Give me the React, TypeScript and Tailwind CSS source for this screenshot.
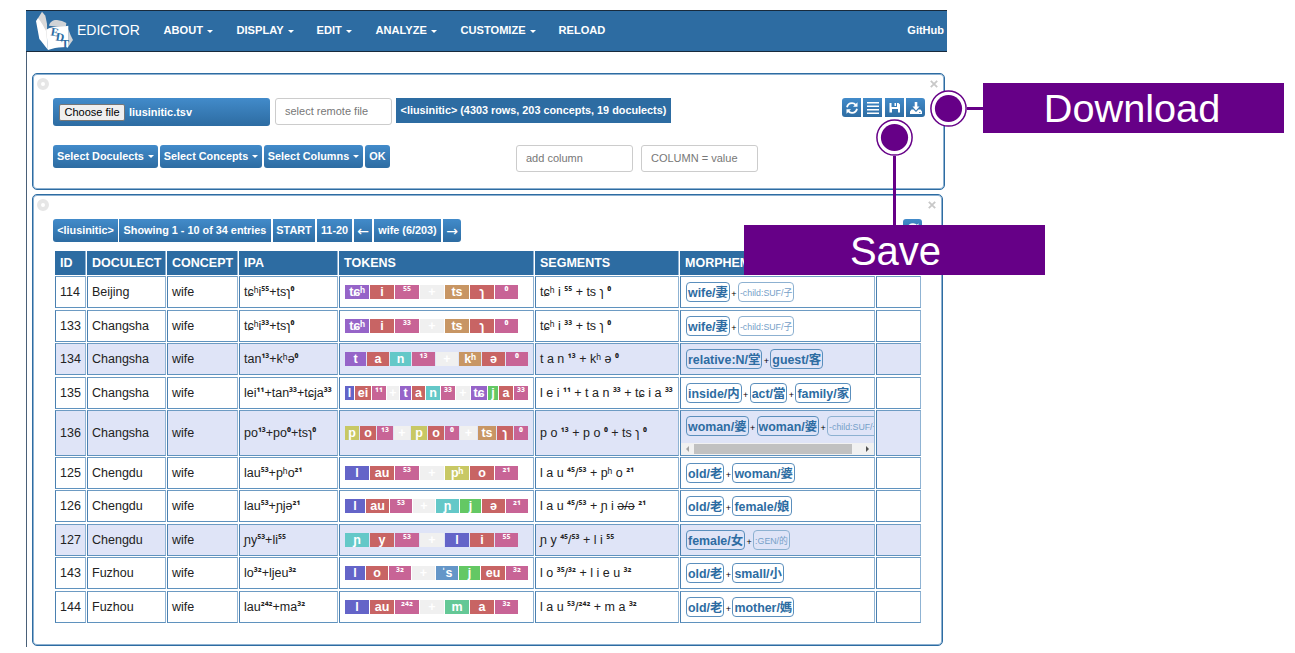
import React from "react";

const TOKEN_COLORS: Record<string, string> = {
  t: "bg-[#9664c8]",
  v: "bg-[#c86464]",
  tone: "bg-[#c86496]",
  plus: "bg-[#f0f0f0]",
  ts: "bg-[#c89664]",
  n: "bg-[#64c8c8]",
  l: "bg-[#6464c8]",
  j: "bg-[#64c864]",
  p: "bg-[#c8c864]",
  s: "bg-[#6496c8]",
  m: "bg-[#64c896]",
};

type Token = [text: string, kind: string];
type Morpheme = { text: string; weak?: boolean };
type Row = {
  id: number;
  place: string;
  ipa: string;
  tokens: Token[];
  starts: number[];
  segments: string;
  morphemes: Morpheme[];
  shaded?: boolean;
  scroll?: boolean;
  height: string;
};

const EVEN7 = [0, 25, 50, 75, 100, 125, 150, 174];

const H33 = "h-[32px] mb-px";
const H34 = "h-[32px] mb-[2px]";

const ROWS: Row[] = [
  {
    id: 114, place: "Beijing", ipa: "tɕʰi⁵⁵+tsɿ⁰", height: H34,
    tokens: [["tɕʰ", "t"], ["i", "v"], ["⁵⁵", "tone"], ["+", "plus"], ["ts", "ts"], ["ɿ", "v"], ["⁰", "tone"]],
    starts: EVEN7, segments: "tɕʰ i ⁵⁵ + ts ɿ ⁰",
    morphemes: [{ text: "wife/妻" }, { text: "-child:SUF/子", weak: true }],
  },
  {
    id: 133, place: "Changsha", ipa: "tɕʰi³³+tsɿ⁰", height: H33,
    tokens: [["tɕʰ", "t"], ["i", "v"], ["³³", "tone"], ["+", "plus"], ["ts", "ts"], ["ɿ", "v"], ["⁰", "tone"]],
    starts: EVEN7, segments: "tɕʰ i ³³ + ts ɿ ⁰",
    morphemes: [{ text: "wife/妻" }, { text: "-child:SUF/子", weak: true }],
  },
  {
    id: 134, place: "Changsha", ipa: "tan¹³+kʰə⁰", height: H34, shaded: true,
    tokens: [["t", "t"], ["a", "v"], ["n", "n"], ["¹³", "tone"], ["+", "plus"], ["kʰ", "ts"], ["ə", "v"], ["⁰", "tone"]],
    starts: [0, 22, 45, 67, 91, 114, 137, 161, 184], segments: "t a n ¹³ + kʰ ə ⁰",
    morphemes: [{ text: "relative:N/堂" }, { text: "guest/客" }],
  },
  {
    id: 135, place: "Changsha", ipa: "lei¹¹+tan³³+tɕja³³", height: H33,
    tokens: [["l", "l"], ["ei", "v"], ["¹¹", "tone"], ["+", "plus"], ["t", "t"], ["a", "v"], ["n", "n"], ["³³", "tone"], ["+", "plus"], ["tɕ", "t"], ["j", "j"], ["a", "v"], ["³³", "tone"]],
    starts: [0, 10, 27, 42, 55, 67, 81, 96, 111, 126, 143, 154, 169, 184], segments: "l e i ¹¹ + t a n ³³ + tɕ i a ³³",
    morphemes: [{ text: "inside/内" }, { text: "act/當" }, { text: "family/家" }],
  },
  {
    id: 136, place: "Changsha", ipa: "po¹³+po⁰+tsɿ⁰", height: "h-[46px] mb-px", shaded: true, scroll: true,
    tokens: [["p", "p"], ["o", "v"], ["¹³", "tone"], ["+", "plus"], ["p", "p"], ["o", "v"], ["⁰", "tone"], ["+", "plus"], ["ts", "ts"], ["ɿ", "v"], ["⁰", "tone"]],
    starts: [0, 15, 32, 49, 66, 83, 100, 115, 133, 152, 169, 184], segments: "p o ¹³ + p o ⁰ + ts ɿ ⁰",
    morphemes: [{ text: "woman/婆" }, { text: "woman/婆" }, { text: "-child:SUF/子", weak: true }],
  },
  {
    id: 125, place: "Chengdu", ipa: "lau⁵³+pʰo²¹", height: H33,
    tokens: [["l", "l"], ["au", "v"], ["⁵³", "tone"], ["+", "plus"], ["pʰ", "p"], ["o", "v"], ["²¹", "tone"]],
    starts: EVEN7, segments: "l a u ⁴⁵/⁵³ + pʰ o ²¹",
    morphemes: [{ text: "old/老" }, { text: "woman/婆" }],
  },
  {
    id: 126, place: "Chengdu", ipa: "lau⁵³+ɲjə²¹", height: H34,
    tokens: [["l", "l"], ["au", "v"], ["⁵³", "tone"], ["+", "plus"], ["ɲ", "n"], ["j", "j"], ["ə", "v"], ["²¹", "tone"]],
    starts: [0, 21, 45, 68, 91, 115, 137, 161, 184],
    segments: "l a u ⁴⁵/⁵³ + ɲ i ə/ə ²¹",
    morphemes: [{ text: "old/老" }, { text: "female/娘" }],
  },
  {
    id: 127, place: "Chengdu", ipa: "ɲy⁵³+li⁵⁵", height: H33, shaded: true,
    tokens: [["ɲ", "n"], ["y", "v"], ["⁵³", "tone"], ["+", "plus"], ["l", "l"], ["i", "v"], ["⁵⁵", "tone"]],
    starts: EVEN7, segments: "ɲ y ⁴⁵/⁵³ + l i ⁵⁵",
    morphemes: [{ text: "female/女" }, { text: ":GEN/的", weak: true }],
  },
  {
    id: 143, place: "Fuzhou", ipa: "lo³²+ljeu³²", height: H34,
    tokens: [["l", "l"], ["o", "v"], ["³²", "tone"], ["+", "plus"], ["ˈs", "s"], ["j", "j"], ["eu", "v"], ["³²", "tone"]],
    starts: [0, 21, 44, 67, 91, 114, 136, 161, 184], segments: "l o ³⁵/³² + l i e u ³²",
    morphemes: [{ text: "old/老" }, { text: "small/小" }],
  },
  {
    id: 144, place: "Fuzhou", ipa: "lau²⁴²+ma³²", height: H33,
    tokens: [["l", "l"], ["au", "v"], ["²⁴²", "tone"], ["+", "plus"], ["m", "m"], ["a", "v"], ["³²", "tone"]],
    starts: EVEN7, segments: "l a u ⁵³/²⁴² + m a ³²",
    morphemes: [{ text: "old/老" }, { text: "mother/媽" }],
  },
];

const COLS = "grid grid-cols-[31px_79px_71px_99px_195px_144px_195px_45px] gap-x-px";

// Tone digits get a bolder, narrower face than the letters; slashed variants are struck through.
function Ipa({ text }: { text: string }) {
  const parts = text.split(/([⁰¹²³⁴⁵⁶⁷⁸⁹]+|ə\/ə)/);
  return (
    <span>
      {parts.map((p, i) => {
        if (i % 2 === 0) return p;
        return p === "ə/ə" ? (
          <s key={i}>{p}</s>
        ) : (
          <span key={i} className="align-[1px] font-['Noto_Sans','Open_Sans',sans-serif] text-[10.4px] leading-none font-bold">{p}</span>
        );
      })}
    </span>
  );
}

const Caret = () => (
  <span className="ml-[4px] inline-block border-x-[3px] border-t-[3px] border-x-transparent border-t-white align-middle" />
);

const GRAD = "bg-linear-to-b from-[#428bca] to-[#2d6ca2]";

function Logo() {
  return (
    <svg viewBox="0 0 120 120" className="h-[40px] w-[40px] shrink-0">
      <path d="M6 26 21 2l10 12 5 24 1 70z" fill="#d9d9d9" />
      <path d="M3 30 9 22c8 8 18 26 24 38l6 56C30 106 20 92 13 84z" fill="#fff" />
      <path d="M42 44C44 32 56 26 66 27c10 1 20 5 28 9l-2 14z" fill="#d0d3d6" />
      <path d="M100 54c4 12 9 24 14 33-5 7-10 14-15 22z" fill="#d0d3d6" />
      <path d="M34 56C55 42 75 50 100 44l-1 66C78 106 58 110 39 117z" fill="#fff" />
      <g fill="#2d6ca2" fontFamily="Liberation Serif, serif" fontWeight="700" fontSize="35">
        <text x="46" y="73" transform="rotate(10 46 73)">E</text>
        <text x="61" y="88" transform="rotate(10 61 88)">D</text>
        <text x="79" y="110">T</text>
      </g>
    </svg>
  );
}

function Ring() {
  return <span className="h-[12px] w-[12px] shrink-0 rounded-full border-4 border-[#e6e6e6]" />;
}

function Cross() {
  return (
    <svg viewBox="0 0 8 8" className="h-[8px] w-[8px] shrink-0" stroke="#c8c8c8" strokeWidth="1.8">
      <path d="M.8.8l6.4 6.4M7.2.8L.8 7.2" />
    </svg>
  );
}

function Refresh() {
  return (
    <svg viewBox="0 0 14 14" className="h-[14px] w-[14px]" fill="none" stroke="#fff" strokeWidth="1.8">
      <path d="M2 6.3C2.6 3.6 4.6 2.2 7 2.2c1.6 0 2.8.6 3.7 1.6" />
      <path d="M12 7.7C11.4 10.4 9.4 11.8 7 11.8c-1.6 0-2.8-.6-3.7-1.6" />
      <path d="M12.5 1.3v4.500H8zM1.500 12.700V8.200H6z" fill="#fff" stroke="none" />
    </svg>
  );
}

function Lines() {
  return (
    <svg viewBox="0 0 14 14" className="h-[14px] w-[14px]" fill="#fff">
      <path d="M1 1h12v1.400H1zM1 4.500h12v1.400H1zM1 8h12v1.400H1zM1 11.500h12v1.400H1z" />
    </svg>
  );
}

function Floppy() {
  return (
    <svg viewBox="0 0 14 14" className="h-[14px] w-[14px]" fill="#fff" fillRule="evenodd">
      <path d="M1.500 2h2v4h5.500V2H10.500l1.500 1.500v8H10V8H4v3.500H1.500zM6.500 2H8v3H6.500z" />
    </svg>
  );
}

function SaveDown() {
  return (
    <svg viewBox="0 0 14 14" className="h-[14px] w-[14px]" fill="#fff" fillRule="evenodd">
      <path d="M5.700 1h2.600v4.500h2.200L7 9.500 3.500 5.500h2.200z" />
      <path d="M2.500 8.500h2L7 11l2.500-2.500h2l1.500 2V13H1v-2.500zM10 11h1.500v.8H10z" />
    </svg>
  );
}

function IconButton({ children, className = "" }: { children: React.ReactNode; className?: string }) {
  return <button className={`flex h-[19px] w-[19px] items-center justify-center ${GRAD} ${className}`}>{children}</button>;
}

function Btn({ children, className = "" }: { children: React.ReactNode; className?: string }) {
  return (
    <button className={`flex h-[23px] items-center justify-center text-[10.85px] font-bold whitespace-nowrap text-white ${GRAD} ${className}`}>
      {children}
    </button>
  );
}

function Field({ text, className }: { text: string; className: string }) {
  return (
    <input
      placeholder={text}
      className={`h-[27px] w-[117px] rounded-[3px] border border-[#ccc] px-[9px] text-[11px] placeholder:text-[#777] ${className}`}
    />
  );
}

function Dot() {
  return (
    <svg viewBox="0 0 37 37" className="h-[37px] w-[37px] shrink-0">
      <circle cx="18.5" cy="18.5" r="17.6" fill="#fff" stroke="#660087" strokeWidth="1.5" />
      <circle cx="18.5" cy="18.5" r="13.6" fill="#660087" />
    </svg>
  );
}

function Callout({ text, className }: { text: string; className: string }) {
  return (
    <span className={`flex h-[50px] w-[301px] items-center justify-center bg-[#660087] pt-[2px] leading-none text-white ${className}`}>{text}</span>
  );
}

const EDGE = "border border-t-[#6d9bc3] border-r-[#8fb3d3] border-b-[#5f92be] border-l-[#4a80b0]";
const CELL = `flex min-w-0 items-center overflow-hidden px-[4px] whitespace-nowrap ${EDGE}`;
const PANEL = "ml-[5px] rounded-[5px] border border-[#2d6ca2] inset-shadow-[0_0_0_1px_#8db1d1]";

function Tokens({ row }: { row: Row }) {
  return (
    <div className="flex h-[14px]">
      {row.tokens.map(([text, kind], i) => (
        <span key={i} className="h-[14px] shrink-0 pr-px" style={{ width: row.starts[i + 1] - row.starts[i] }}>
          <span className={`flex h-full items-center justify-center text-[12.5px] leading-none font-bold text-white ${TOKEN_COLORS[kind]}`}>
            <Ipa text={text} />
          </span>
        </span>
      ))}
    </div>
  );
}

function Morphemes({ row }: { row: Row }) {
  return (
    <div className="flex items-center pl-px">
      {row.morphemes.map((m, i) => (
        <React.Fragment key={i}>
          {i > 0 && <span className="w-[8px] shrink-0 pt-[4px] text-center text-[9px] leading-none text-black">+</span>}
          <span
            className={
              m.weak
                ? "flex h-[20px] shrink-0 items-center rounded-[4px] border border-[#8db1d1] px-px pt-[4px] text-[8.8px] text-[#75a0c8]"
                : "flex h-[20px] shrink-0 items-center rounded-[4px] border border-[#5b8fbd] px-px pt-[3px] text-[12.4px] font-bold text-[#2d6ca2]"
            }
          >
            {m.text}
          </span>
        </React.Fragment>
      ))}
    </div>
  );
}

function ScrollBar() {
  return (
    <div className="flex h-[12px] w-full items-center justify-between bg-[#f1f1f1] px-[5px]">
      <span className="border-y-[3px] border-r-[3px] border-y-transparent border-r-[#a3a3a3]" />
      <span className="mr-auto ml-[5px] h-[10px] w-[158px] bg-[#c1c1c1]" />
      <span className="border-y-[3px] border-l-[3px] border-y-transparent border-l-[#505050]" />
    </div>
  );
}

const HEADS = ["ID", "DOCULECT", "CONCEPT", "IPA", "TOKENS", "SEGMENTS", "MORPHEMES", ""];
const MENU: [string, string, boolean][] = [
  ["ABOUT", "w-[73px]", true],
  ["DISPLAY", "w-[80px]", true],
  ["EDIT", "w-[59px]", true],
  ["ANALYZE", "w-[85px]", true],
  ["CUSTOMIZE", "w-[98px]", true],
  ["RELOAD", "w-[60px]", false],
];

export default function App() {
  return (
    <div className="relative h-[653px] w-[1295px] overflow-hidden bg-white pt-[10px] pl-[26px] font-['Liberation_Sans','Noto_Sans_CJK_SC',sans-serif] text-[#222]">
      <div className="h-[637px] w-[921px] border-l border-[#4a6078]">
        <nav className="-ml-px flex h-[42px] items-center border-y border-[#182a3c] bg-[#2d6ca2] pr-[3px] pl-[9px] text-white">
          <Logo />
          <span className="ml-[2px] w-[86.5px] pb-px text-[14px]">EDICTOR</span>
          {MENU.map(([label, w, caret]) => (
            <span key={label} className={`${w} pb-px text-[11.1px] font-bold whitespace-nowrap`}>
              {label}
              {caret && <Caret />}
            </span>
          ))}
          <span className="ml-auto pb-px text-[11px] font-bold">GitHub</span>
        </nav>

        <section className={`mt-[21px] h-[117px] w-[913px] ${PANEL}`}>
          <div className="flex items-center justify-between pt-[4px] pr-[6px] pl-[4px]">
            <Ring />
            <Cross />
          </div>
          <div className="mt-[8px] flex items-start pl-[20px]">
            <div className={`flex h-[28px] w-[217px] items-center rounded-[3px] pl-[6px] text-[11px] ${GRAD}`}>
              <button className="h-[17px] w-[66px] rounded-[2px] border border-[#767676] bg-[#efefef] leading-none text-black">Choose file</button>
              <span className="ml-[4px] text-[10.9px] font-bold text-white">liusinitic.tsv</span>
            </div>
            <Field text="select remote file" className="ml-[5px] pb-[2px]" />
            <div className="ml-[4px] flex h-[25px] w-[275px] items-center justify-center bg-[#2d6ca2] text-[10.85px] font-bold whitespace-nowrap text-white">
              &lt;liusinitic&gt; (4303 rows, 203 concepts, 19 doculects)
            </div>
            <div className="ml-[171px] flex gap-[2px]">
              <IconButton className="rounded-l-[3px]"><Refresh /></IconButton>
              <IconButton><Lines /></IconButton>
              <IconButton className="ml-px"><Floppy /></IconButton>
              <IconButton className="rounded-r-[3px]"><SaveDown /></IconButton>
            </div>
          </div>
          <div className="mt-[19px] flex pl-[20px]">
            <Btn className="w-[105px] rounded-[3px]">Select Doculects<Caret /></Btn>
            <Btn className="ml-[2px] w-[102px] rounded-[3px]">Select Concepts<Caret /></Btn>
            <Btn className="ml-[2px] w-[99px] rounded-[3px]">Select Columns<Caret /></Btn>
            <Btn className="ml-[2px] w-[25px] rounded-[3px]">OK</Btn>
            <Field text="add column" className="ml-[126px] pb-px" />
            <Field text="COLUMN = value" className="ml-[8px] pb-px" />
          </div>
        </section>

        <section className={`mt-[4px] h-[452px] w-[911px] ${PANEL}`}>
          <div className="flex items-center justify-between pt-[4px] pr-[6px] pl-[4px]">
            <Ring />
            <Cross />
          </div>
          <div className="mt-[8px] flex pr-[20px] pl-[20px]">
            <Btn className="mr-px w-[65px] rounded-l-[3px]">&lt;liusinitic&gt;</Btn>
            <Btn className="mr-[2px] w-[152px]">Showing 1 - 10 of 34 entries</Btn>
            <Btn className="mr-[2px] w-[42px]">START</Btn>
            <Btn className="mr-[2px] w-[35px]">11-20</Btn>
            <Btn className="mr-[2px] w-[18px]"><span className="pt-px font-['DejaVu_Sans',sans-serif] text-[14px] leading-none font-normal">←</span></Btn>
            <Btn className="mr-[2px] w-[67px]">wife (6/203)</Btn>
            <Btn className="w-[18px] rounded-r-[3px]"><span className="pt-px font-['DejaVu_Sans',sans-serif] text-[14px] leading-none font-normal">→</span></Btn>
            <IconButton className="ml-auto rounded-[3px]"><Refresh /></IconButton>
          </div>

          <div className="mt-[9px] ml-[22px] w-[866px] text-[12.5px]">
            <div className={`${COLS} mb-px h-[24px]`}>
              {HEADS.map((h, i) => (
                <div key={i} className="flex items-center border-r border-[#8fb3d3] bg-[#2d6ca2] pl-[5px] font-bold whitespace-nowrap text-white">{h}</div>
              ))}
            </div>
            {ROWS.map((row) => (
              <div key={row.id} className={`${COLS} ${row.height} ${row.shaded ? "[&>div]:bg-[#dfe4f7]" : ""}`}>
                <div className={CELL}>{row.id}</div>
                <div className={CELL}>{row.place}</div>
                <div className={CELL}>wife</div>
                <div className={CELL}><Ipa text={row.ipa} /></div>
                <div className={`${CELL} pl-[5px]`}><Tokens row={row} /></div>
                <div className={CELL}><Ipa text={row.segments} /></div>
                {row.scroll ? (
                  <div className={`flex min-w-0 flex-col justify-between overflow-hidden pt-[5px] whitespace-nowrap ${EDGE}`}>
                    <div className="pl-[4px]"><Morphemes row={row} /></div>
                    <ScrollBar />
                  </div>
                ) : (
                  <div className={CELL}><Morphemes row={row} /></div>
                )}
                <div className={CELL} />
              </div>
            ))}
          </div>
        </section>
      </div>

      <div className="absolute top-[83px] left-[930px] flex h-[50px] items-center">
        <Dot />
        <span className="h-[3px] w-[16px] bg-[#660087]" />
        <Callout text="Download" className="pr-[3px] text-[39.7px]" />
      </div>
      <div className="absolute top-[119px] left-[744px] flex w-[301px] flex-col items-center">
        <Dot />
        <span className="h-[69px] w-[3px] bg-[#660087]" />
        <Callout text="Save" className="pl-[2px] text-[40px]" />
      </div>
    </div>
  );
}
